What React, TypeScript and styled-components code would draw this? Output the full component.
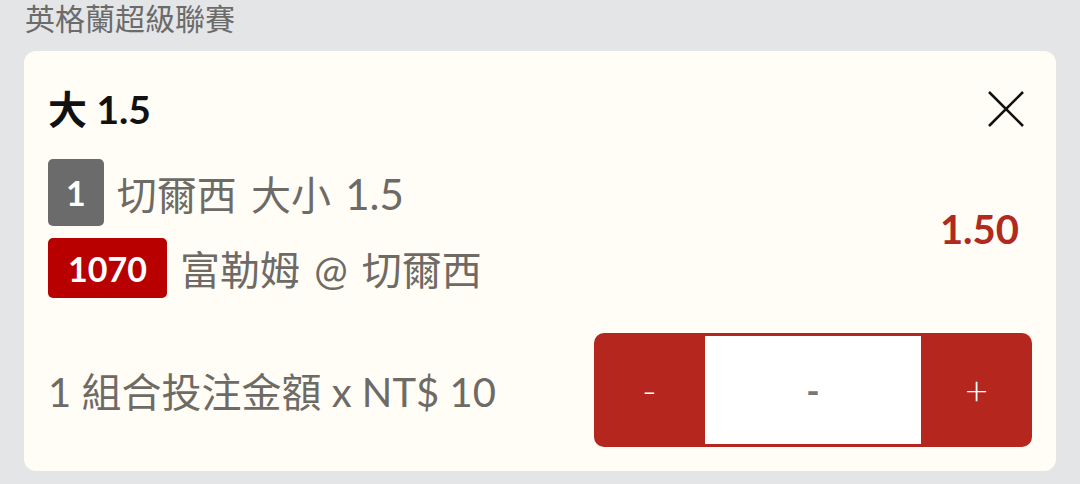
import React from "react";
import styled, { createGlobalStyle } from "styled-components";

const Global = createGlobalStyle`
  html, body { margin: 0; padding: 0; }
  body {
    background: #e4e5e7;
    font-family: "Lato", "Noto Sans CJK TC", sans-serif;
  }
`;

const Page = styled.div`
  width: 1080px;
  height: 484px;
  box-sizing: border-box;
  padding: 0 24px;
  background: #e4e5e7;
  overflow: hidden;
`;

const League = styled.div`
  height: 36px;
  line-height: 36px;
  font-size: 30px;
  color: #6b6b6b;
  padding-left: 1px;
  margin-bottom: 15px;
`;

const Card = styled.div`
  background: #fffdf5;
  border-radius: 12px;
  padding: 34px 24px 24px 24px;
  box-sizing: border-box;
  height: 420px;
  display: flex;
  flex-direction: column;
`;

const TitleRow = styled.div`
  display: flex;
  align-items: center;
  justify-content: space-between;
  height: 48px;
`;

const Title = styled.div`
  font-size: 39px;
  font-weight: 700;
  color: #111;
  line-height: 48px;
`;

const CloseButton = styled.button`
  width: 36px;
  height: 36px;
  padding: 0;
  border: none;
  background: transparent;
  margin-right: 8px;
  display: flex;
  align-items: center;
  justify-content: center;
`;

const Body = styled.div`
  display: flex;
  align-items: center;
  justify-content: space-between;
  margin-top: 26px;
`;

const Lines = styled.div`
  display: flex;
  flex-direction: column;
  gap: 12px;
`;

const Line = styled.div`
  display: flex;
  align-items: center;
  gap: 13px;
`;

const Badge = styled.span<{ $tone: "gray" | "red"; $h: number; $px: number }>`
  display: inline-flex;
  align-items: center;
  justify-content: center;
  height: ${(p) => p.$h}px;
  padding: 0 ${(p) => p.$px}px;
  border-radius: 5px;
  background: ${(p) => (p.$tone === "gray" ? "#6b6b6b" : "#b80000")};
  color: #fff;
  font-size: 34px;
  font-weight: 700;
`;

const LineText = styled.span`
  font-size: 40px;
  color: #6e6a65;
  white-space: pre;
  word-spacing: 4px;
`;

const Num = styled.span`
  font-size: 42px;
`;

const Odds = styled.div`
  font-size: 40px;
  font-weight: 700;
  color: #b02a20;
  margin-right: 13px;
`;

const Footer = styled.div`
  display: flex;
  align-items: center;
  justify-content: space-between;
  margin-top: 35px;
`;

const Stake = styled.div`
  font-size: 40px;
  color: #6e6a65;
  white-space: pre;
`;

const Stepper = styled.div`
  display: flex;
  width: 438px;
  height: 114px;
  box-sizing: border-box;
  padding: 3px 0;
  background: #b5261e;
  border-radius: 10px;
`;

const StepButton = styled.button`
  width: 111px;
  border: none;
  background: transparent;
  color: #fff;
  font-family: "Lato", sans-serif;
  font-size: 40px;
  font-weight: 300;
  padding: 0;
  display: flex;
  align-items: center;
  justify-content: center;
`;

const Amount = styled.div`
  flex: 1;
  background: #fff;
  display: flex;
  align-items: center;
  justify-content: center;
  color: #777;
  font-size: 36px;
  font-weight: 700;
`;

export default function App() {
  return (
    <Page>
      <Global />
      <League>英格蘭超級聯賽</League>
      <Card>
        <TitleRow>
          <Title>大 1.5</Title>
          <CloseButton aria-label="close">
            <svg width="36" height="36" viewBox="0 0 36 36">
              <path d="M1 1 L35 35 M35 1 L1 35" stroke="#111" strokeWidth="2.6" fill="none" />
            </svg>
          </CloseButton>
        </TitleRow>
        <Body>
          <Lines>
            <Line>
              <Badge $tone="gray" $h={67} $px={18}>1</Badge>
              <LineText>切爾西 大小 <Num>1.5</Num></LineText>
            </Line>
            <Line>
              <Badge $tone="red" $h={60} $px={20}>1070</Badge>
              <LineText>富勒姆 @ 切爾西</LineText>
            </Line>
          </Lines>
          <Odds>1.50</Odds>
        </Body>
        <Footer>
          <Stake>1 組合投注金額 x NT$ 10</Stake>
          <Stepper>
            <StepButton>-</StepButton>
            <Amount>-</Amount>
            <StepButton>+</StepButton>
          </Stepper>
        </Footer>
      </Card>
    </Page>
  );
}
